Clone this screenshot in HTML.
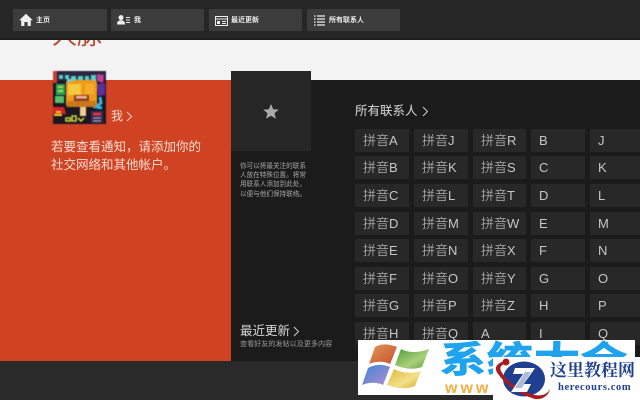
<!DOCTYPE html>
<html lang="zh">
<head>
<meta charset="utf-8">
<style>
html,body{margin:0;padding:0;width:640px;height:400px;overflow:hidden;background:#2a2a2a}
body{position:relative;font-family:"Liberation Sans","Noto Sans CJK SC",sans-serif;color:#e8e8e8}
.a{position:absolute;white-space:nowrap}
.nav{position:absolute;top:9px;height:22px;background:#3c3c3c}
.nl{position:absolute;top:14px;font-size:7px;line-height:14px;color:#eee;white-space:nowrap;font-weight:bold}
.t{position:absolute;height:23px;background:#282828;color:#c6c6c6;font-size:13px;line-height:24px;padding-left:8px;box-sizing:border-box;white-space:nowrap;overflow:hidden;font-weight:300}
</style>
</head>
<body>
<div class="a" style="left:0;top:0;width:640px;height:40px;background:#262626"></div>
<div class="a" style="left:0;top:40px;width:640px;height:40px;background:#f3f3f3;overflow:hidden">
  <div class="a" style="left:52px;top:-19px;font-size:25px;line-height:30px;color:#b9482f">人脉</div>
</div>
<div class="a" style="left:0;top:38px;width:640px;height:2px;background:#1c1c1c"></div>
<div class="a" style="left:0;top:80px;width:231px;height:281px;background:#cf4322"></div>
<div class="a" style="left:231px;top:80px;width:409px;height:281px;background:#1b1b1b"></div>
<div class="a" style="left:231px;top:71px;width:80px;height:80px;background:#262626"></div>

<div class="nav" style="left:13px;width:94px"></div>
<div class="nav" style="left:111px;width:93px"></div>
<div class="nav" style="left:209px;width:93px"></div>
<div class="nav" style="left:307px;width:93px"></div>

<svg class="a" style="left:19px;top:13px" width="14" height="14" viewBox="0 0 14 14"><path d="M7 .8 L13.8 7.2 L11.8 7.2 L11.8 13 L8.6 13 L8.6 9 L5.4 9 L5.4 13 L2.2 13 L2.2 7.2 L.2 7.2Z" fill="#f0f0f0"/></svg>
<div class="nl" style="left:36px">主页</div>
<svg class="a" style="left:117px;top:15px" width="14" height="10" viewBox="0 0 14 10"><circle cx="4" cy="2.6" r="2.5" fill="#f0f0f0"/><path d="M0 9.5 C0 6 2 5.2 4 5.2 C6 5.2 8 6 8 9.5Z" fill="#f0f0f0"/><path d="M9 2.5h4M9 5h4M9 7.5h4" stroke="#eee" stroke-width="1"/></svg>
<div class="nl" style="left:134px">我</div>
<svg class="a" style="left:215px;top:16px" width="13" height="10" viewBox="0 0 13 10"><path d="M.5.5h12v9H.5z" fill="none" stroke="#eee"/><path d="M0 3h13" stroke="#eee"/><path d="M2 5h3v3H2zM7 5h4v1H7zM7 7h4v1H7z" fill="#eee"/></svg>
<div class="nl" style="left:231px">最近更新</div>
<svg class="a" style="left:314px;top:15px" width="11" height="11" viewBox="0 0 11 11"><path d="M0 1h1.6M0 4h1.6M0 7h1.6M0 10h1.6M3 1h8M3 4h8M3 7h8M3 10h8" stroke="#f0f0f0" stroke-width="1.3"/></svg>
<div class="nl" style="left:329px">所有联系人</div>

<svg class="a" style="left:53px;top:71px;filter:blur(.5px)" width="53" height="53" viewBox="0 0 53 53">
<rect width="53" height="53" fill="#1a1722"/>
<rect x="0" y="0" width="53" height="10" fill="#2a2540"/>
<path d="M6 6h4M12 6h4M18 7h5M25 7h5M32 7h4M38 6h5" stroke="#4fd0c0" stroke-width="4"/>
<path d="M44 3l7 1-1 8-6-2z" fill="#c23f9b"/>
<rect x="0" y="0" width="4" height="12" fill="#c8402c"/>
<rect x="3" y="13" width="9" height="11" fill="#25a85c"/>
<path d="M5 16h5M5 20h5" stroke="#e8e23a" stroke-width="1.5"/>
<rect x="2" y="25" width="9" height="7" fill="#56c06a"/>
<path d="M0 36h11l2 7H0z" fill="#d8242c"/>
<path d="M44 13l8-1v12l-7 1z" fill="#5c2f9e"/>
<path d="M47 26l1 6-5 4 6 1" stroke="#2fb6e8" stroke-width="3" fill="none"/>
<rect x="13" y="9" width="31" height="27" rx="3" fill="#ef9a1c"/>
<path d="M14 12Q28 5 43 10V8H14z" fill="#7cd0dc"/>
<rect x="15" y="13" width="13" height="11" fill="#f8c93e"/>
<rect x="32" y="13" width="9" height="10" fill="#f3ad28"/>
<rect x="14" y="30" width="29" height="6" fill="#c8781a"/>
<rect x="21" y="24" width="15" height="6" fill="#8c3f1e"/>
<rect x="23" y="25" width="11" height="2.5" fill="#f0b8a0"/>
<rect x="27" y="36" width="6" height="9" fill="#f2cb92"/>
<path d="M1 44h8M3 41h5" stroke="#e8d51f" stroke-width="2" fill="none"/>
<path d="M13 47h4v3h-4zM19 45h4v5h-4zM25 47l3 3 3-3" stroke="#c8d43a" stroke-width="1.6" fill="none"/>
<path d="M38 40h12v12H38z" fill="#3a2a4a"/>
<path d="M40 43h8" stroke="#d8344a" stroke-width="3"/>
<path d="M40 47h8M40 50h8" stroke="#9fa8c8" stroke-width="1.2"/>
</svg>
<div class="a" style="left:111px;top:108px;font-size:12px;line-height:16px;color:#f6dcd3">我</div>
<svg class="a" style="left:126px;top:111px" width="7" height="11" viewBox="0 0 7 11"><path d="M1 1l4.5 4.5L1 10" fill="none" stroke="#f4d6cc" stroke-width=".9"/></svg>
<div class="a" style="left:51px;top:139px;font-size:12.5px;line-height:17.5px;color:#f7dcd2">若要查看通知，请添加你的<br>社交网络和其他帐户。</div>

<svg class="a" style="left:263px;top:104px" width="16" height="15" viewBox="0 0 16 15"><path d="M8 0l2.2 5.2 5.6.4-4.3 3.6 1.4 5.5L8 11.8l-4.9 2.9 1.4-5.5L.2 5.6l5.6-.4z" fill="#a9a9a9"/></svg>
<div class="a" style="left:240px;top:162px;font-size:6.6px;line-height:9.2px;color:#a6a6a6">你可以将最关注的联系<br>人放在特殊位置。将常<br>用联系人添加到此处，<br>以便与他们保持联络。</div>
<div class="a" style="left:240px;top:323px;font-size:12.5px;line-height:16px;color:#d8d8d8">最近更新</div>
<svg class="a" style="left:293px;top:326px" width="7" height="11" viewBox="0 0 7 11"><path d="M1 1l4.5 4.5L1 10" fill="none" stroke="#d8d8d8" stroke-width=".9"/></svg>
<div class="a" style="left:240px;top:339px;font-size:7.1px;line-height:10px;color:#9a9a9a">查看好友的发帖以及更多内容</div>

<div class="a" style="left:355px;top:103px;font-size:12.5px;line-height:16px;color:#d8d8d8">所有联系人</div>
<svg class="a" style="left:422px;top:106px" width="7" height="11" viewBox="0 0 7 11"><path d="M1 1l4.5 4.5L1 10" fill="none" stroke="#d8d8d8" stroke-width=".9"/></svg>

<div class="t" style="left:355px;top:129px;width:54px">拼音A</div>
<div class="t" style="left:355px;top:156px;width:54px">拼音B</div>
<div class="t" style="left:355px;top:184px;width:54px">拼音C</div>
<div class="t" style="left:355px;top:212px;width:54px">拼音D</div>
<div class="t" style="left:355px;top:239px;width:54px">拼音E</div>
<div class="t" style="left:355px;top:267px;width:54px">拼音F</div>
<div class="t" style="left:355px;top:294px;width:54px">拼音G</div>
<div class="t" style="left:355px;top:322px;width:54px">拼音H</div>

<div class="t" style="left:414px;top:129px;width:54px">拼音J</div>
<div class="t" style="left:414px;top:156px;width:54px">拼音K</div>
<div class="t" style="left:414px;top:184px;width:54px">拼音L</div>
<div class="t" style="left:414px;top:212px;width:54px">拼音M</div>
<div class="t" style="left:414px;top:239px;width:54px">拼音N</div>
<div class="t" style="left:414px;top:267px;width:54px">拼音O</div>
<div class="t" style="left:414px;top:294px;width:54px">拼音P</div>
<div class="t" style="left:414px;top:322px;width:54px">拼音Q</div>

<div class="t" style="left:473px;top:129px;width:53px">拼音R</div>
<div class="t" style="left:473px;top:156px;width:53px">拼音S</div>
<div class="t" style="left:473px;top:184px;width:53px">拼音T</div>
<div class="t" style="left:473px;top:212px;width:53px">拼音W</div>
<div class="t" style="left:473px;top:239px;width:53px">拼音X</div>
<div class="t" style="left:473px;top:267px;width:53px">拼音Y</div>
<div class="t" style="left:473px;top:294px;width:53px">拼音Z</div>
<div class="t" style="left:473px;top:322px;width:53px">A</div>

<div class="t" style="left:531px;top:129px;width:54px">B</div>
<div class="t" style="left:531px;top:156px;width:54px">C</div>
<div class="t" style="left:531px;top:184px;width:54px">D</div>
<div class="t" style="left:531px;top:212px;width:54px">E</div>
<div class="t" style="left:531px;top:239px;width:54px">F</div>
<div class="t" style="left:531px;top:267px;width:54px">G</div>
<div class="t" style="left:531px;top:294px;width:54px">H</div>
<div class="t" style="left:531px;top:322px;width:54px">I</div>

<div class="t" style="left:590px;top:129px;width:50px">J</div>
<div class="t" style="left:590px;top:156px;width:50px">K</div>
<div class="t" style="left:590px;top:184px;width:50px">L</div>
<div class="t" style="left:590px;top:212px;width:50px">M</div>
<div class="t" style="left:590px;top:239px;width:50px">N</div>
<div class="t" style="left:590px;top:267px;width:50px">O</div>
<div class="t" style="left:590px;top:294px;width:50px">P</div>
<div class="t" style="left:590px;top:322px;width:50px">Q</div>

<div class="a" style="left:358px;top:340px;width:277px;height:55px;background:#fff;overflow:hidden">
  <svg class="a" style="left:4px;top:3px" width="68" height="46" viewBox="0 0 68 46">
    <defs>
      <linearGradient id="g1" x1="0" y1="0" x2="1" y2="1"><stop offset="0" stop-color="#e0985a"/><stop offset="1" stop-color="#c8502c"/></linearGradient>
      <linearGradient id="g2" x1="0" y1="0" x2="1" y2="1"><stop offset="0" stop-color="#4f9a3a"/><stop offset=".6" stop-color="#a9d07a"/><stop offset="1" stop-color="#5fa23f"/></linearGradient>
      <linearGradient id="g3" x1="0" y1="0" x2="1" y2="1"><stop offset="0" stop-color="#3f88d8"/><stop offset="1" stop-color="#b08ad0"/></linearGradient>
      <linearGradient id="g4" x1="0" y1="0" x2="1" y2="1"><stop offset="0" stop-color="#e0b83a"/><stop offset=".6" stop-color="#f2e08a"/><stop offset="1" stop-color="#d8a52c"/></linearGradient>
    </defs>
    <path d="M13 4C20 0 27 1 35 4L28 21C22 18 14 18 7 21Z" fill="url(#g1)"/>
    <path d="M39 6C47 10 56 10 67 6L60 24C51 27 42 26 33 22Z" fill="url(#g2)"/>
    <path d="M6 25C13 21 21 21 28 24L21 42C15 39 7 39 0 42Z" fill="url(#g3)"/>
    <path d="M32 26C40 30 50 31 59 28L53 43C44 47 34 45 25 42Z" fill="url(#g4)"/>
  </svg>
  <div class="a" style="left:82px;top:0;font-size:46px;line-height:50px;font-weight:bold;color:#1fa3ee;letter-spacing:1px;-webkit-text-stroke:1.2px #1fa3ee;transform:scaleY(.78);transform-origin:0 0">系统大全</div>
  <div class="a" style="left:87px;top:41px;font-size:16px;line-height:16px;font-weight:bold;color:#f0b040;letter-spacing:3px;font-family:'Liberation Sans',sans-serif">www</div>
</div>
<div class="a" style="left:493px;top:357px;width:147px;height:43px;background:#fff;overflow:hidden">
  <svg class="a" style="left:0;top:0" width="62" height="43" viewBox="0 0 62 43">
    <ellipse cx="31" cy="22" rx="21" ry="17.5" fill="#1f3f90"/>
    <path d="M12 4C3 6 0 12 6 18C13 29 30 39 42 42C50 43 56 38 57 32C54 38 47 40 38 37C26 33 13 24 8 14C6 10 9 7 13 7Z" fill="#a81c20"/>
    <circle cx="13" cy="5" r="3.5" fill="#a81c20"/>
    <path d="M22 11H42L31 27H38L34 35H18L30 17H20Z" fill="#fff"/>
    <path d="M32 15L38 15L29 31H22Z" fill="#1f3f90" opacity=".35"/>
  </svg>
  <div class="a" style="left:57px;top:3px;font-size:17px;line-height:22px;font-weight:bold;color:#1f4090;font-family:'Liberation Serif','Noto Serif CJK SC',serif">这里教程网</div>
  <div class="a" style="left:65px;top:24px;font-size:10.5px;line-height:14px;font-weight:bold;color:#1f4090;letter-spacing:.6px;font-family:'Liberation Serif',serif">herecours.com</div>
</div>
</body>
</html>
